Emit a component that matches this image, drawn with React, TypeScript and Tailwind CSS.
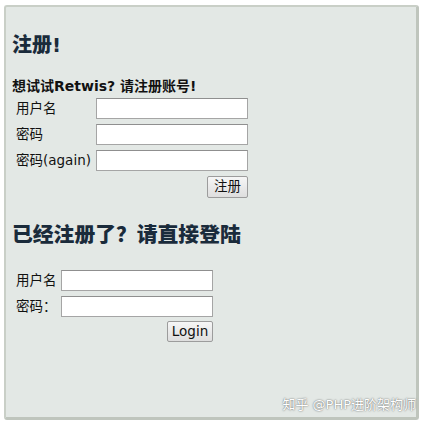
import React from "react";

const font = { fontFamily: '"DejaVu Sans", "Noto Sans CJK SC", sans-serif' };

function Field({ label }: { label: string }) {
  return (
    <>
      <div className="flex h-[26px] items-center pl-[4px] text-[13.5px] text-[#111]">{label}</div>
      <div className="flex h-[26px] items-center">
        <input
          type="text"
          className="h-[21px] w-[152px] border border-[#a5a5a5] border-t-[#8f8f8f] bg-white outline-none"
        />
      </div>
    </>
  );
}

function Button({ children, className }: { children: React.ReactNode; className?: string }) {
  return (
    <button
      className={
        "rounded-[2px] border border-[#9c9c9c] bg-gradient-to-b from-[#f6f6f6] to-[#dedede] text-[13.5px] leading-none text-[#111] " +
        (className ?? "")
      }
    >
      {children}
    </button>
  );
}

export default function App() {
  return (
    <div className="h-[427px] w-[429px] bg-white pl-[4px] pt-[5px]" style={font}>
      <div className="relative h-[415px] w-[415px] rounded-[3px] border-[2px] border-[#c9cfc7] border-r-[3px] border-b-[3px] border-r-[#bfc5bd] border-b-[#bfc5bd] bg-[#e3e8e5] px-[6px] pt-[26px]">
        <h2 className="text-[20px] font-black leading-[24px] text-[#1a2b3b]">注册!</h2>

        <div className="mt-[20px] text-[14px] font-bold leading-[18px] text-[#111]">
          想试试Retwis? 请注册账号!
        </div>
        <div className="grid w-fit grid-cols-[84px_152px]">
          <Field label="用户名" />
          <Field label="密码" />
          <Field label="密码(again)" />
        </div>
        <div className="mt-[3px] flex w-[236px] justify-end">
          <Button className="h-[22px] w-[41px]">注册</Button>
        </div>

        <h2 className="mt-[25px] text-[20.8px] font-black leading-[24px] text-[#1a2b3b]">
          已经注册了？请直接登陆
        </h2>

        <div className="mt-[20px] grid w-fit grid-cols-[49px_152px]">
          <Field label="用户名" />
          <Field label="密码：" />
        </div>
        <div className="mt-[2px] flex w-[201px] justify-end">
          <Button className="h-[21px] w-[46px]">Login</Button>
        </div>

        <div
          className="absolute bottom-[4px] right-[0px] text-[13px] leading-[16px] text-white"
          style={{ textShadow: "0 0 2px rgba(0,0,0,0.5), 0 0 1px rgba(0,0,0,0.3)" }}
        >
          知乎 @PHP进阶架构师
        </div>
      </div>
    </div>
  );
}
